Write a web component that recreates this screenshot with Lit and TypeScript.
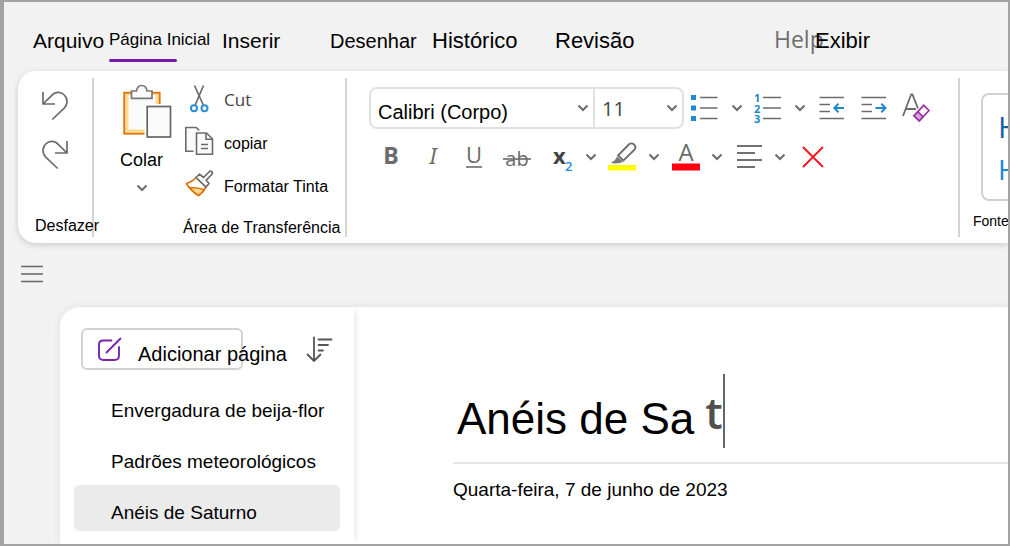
import { LitElement, html, svg, css } from "lit";
import { customElement, property, state } from "lit/decorators.js";
import { classMap } from "lit/directives/class-map.js";

const undoPath = svg`<path d="M1 1v12h12M1 13 9 5.2C12.500 .6 18.500 .2 22.300 4c4 4.200 3.400 9.600-.3 13.400L10.300 28.500"/>`;

const icons: Record<string, unknown> = {
  undo: html`<svg width="26" height="30" viewBox="0 0 26 30" class="line">${undoPath}</svg>`,
  redo: html`<svg width="26" height="30" viewBox="0 0 26 30" class="line"><g transform="matrix(-1 0 0 1 26 0)">${undoPath}</g></svg>`,
  chevron: html`<svg width="12" height="8" viewBox="0 0 12 8" class="line bold"><path d="M1.500 1.500 6 6l4.500-4.500"/></svg>`,
  paste: html`<svg width="54" height="56" viewBox="0 0 54 56">
    <rect x="4.200" y="8.700" width="35.500" height="41" fill="#fbdb93" stroke="#e0730c" stroke-width="1.800"/>
    <rect x="8.500" y="11" width="27" height="34.500" fill="#fafafa"/>
    <path d="M24.500 20H54v36H24.500z" fill="#fff"/>
    <rect x="27.200" y="22.500" width="23.300" height="30.500" fill="#fafafa" stroke="#666" stroke-width="1.700"/>
    <path d="M11.500 7h5C17 3.300 19 1.500 21.700 1.500s4.800 1.800 5.300 5.500h5v7.300H11.500z" fill="#fafafa" stroke="#777" stroke-width="1.700"/></svg>`,
  cut: html`<svg width="28" height="30" viewBox="0 0 28 30" fill="none" stroke-width="1.700">
    <path d="M9.500 1.500 18.500 21.500M18.500 1.500 10 21.500" stroke="#6b6b6b"/>
    <circle cx="9" cy="24.300" r="3" stroke="#2b8fd3" stroke-width="2"/><circle cx="19.500" cy="24.300" r="3" stroke="#2b8fd3" stroke-width="2"/></svg>`,
  copy: html`<svg width="28" height="30" viewBox="0 0 28 30" fill="#fafafa" stroke="#6b6b6b" stroke-width="1.600">
    <path d="M8.500 24.300H.8V.5h10.400l3 3" /><path d="M11.500 6h10l6 6v15.300h-16z"/><path d="M21 6v6.300h6.500M16 17.500h7M16 21.500h7" fill="none"/></svg>`,
  brush: html`<svg width="28" height="30" viewBox="0 0 28 30" stroke-linejoin="round" stroke-width="1.700">
    <path d="M1.300 13.500C5.500 12.500 8.500 10.500 11 7.500l10 9.500c-2 4-4.500 6.500-7.500 8.500-5-3-9-7-12.200-12z" fill="#fff" stroke="#e0730c"/>
    <path d="M4.500 17.500c5 0 9.500 0 14.500 2.500-1.500 2.500-3.500 4-5.500 5.500-3.500-2-6.500-4.800-9-8z" fill="#fbdb93" stroke="#e0730c"/>
    <path d="m11 7.500 3.500-3.300 4 3.300L24 2c2-2 4.500.3 2.700 2.500l-5.400 5.700 2.700 3.300-3 3.500z" fill="#fafafa" stroke="#6b6b6b"/></svg>`,
  bullets: html`<svg width="28" height="28" viewBox="0 0 28 28"><path d="M0 1h5v5H0zM0 11.500h5v5H0zM0 22h5v5H0z" fill="#2088cf"/>
    <path d="M9 3.500h17.500M9 14h17.500M9 24.500h17.500" stroke="#6b6b6b" stroke-width="1.600"/></svg>`,
  numbers: html`<svg width="28" height="30" viewBox="0 0 28 30"><g class="digits"><text x="0" y="9">1</text><text x="0" y="19.500">2</text><text x="0" y="30">3</text></g>
    <path d="M9 4.500h18M9 15h18M9 25.500h18" stroke="#6b6b6b" stroke-width="1.600"/></svg>`,
  outdent: html`<svg width="28" height="28" viewBox="0 0 28 28" class="line"><path d="M1.500 3.500H26M1.500 10.500H12M1.500 17.500H12M1.500 24.500H26"/><path class="blue" d="M26 14H16.500M20.500 9.800 16.300 14l4.200 4.200"/></svg>`,
  indent: html`<svg width="28" height="28" viewBox="0 0 28 28" class="line"><path d="M1.500 3.500H26M1.500 10.500H12M1.500 17.500H12M1.500 24.500H26"/><path class="blue" d="M15.500 14H25M21.300 9.800 25.500 14l-4.200 4.200"/></svg>`,
  clear: html`<svg width="28" height="30" viewBox="0 0 28 30" class="line"><path stroke-width="1.800" d="M1 23 9.200 1.300h1.200L16 15.500M4 16h10"/>
    <path d="m12 22.800 9.700-10.500 5.300 5.200-9.800 10.300z" fill="#fff" stroke="#9a35a5"/><path d="m12 22.800 3.900-4.200 5.200 5.200-3.900 4z" fill="#d7a4dc" stroke="#9a35a5"/></svg>`,
  underline: html`<svg width="28" height="28" viewBox="0 0 28 28" class="letters"><text x="13" y="20" text-anchor="middle">U</text><path d="M5 24h16" stroke="#6b6b6b" stroke-width="1.600"/></svg>`,
  strike: html`<svg width="28" height="28" viewBox="0 0 28 28" class="letters"><text class="ab" x="14" y="22.500" text-anchor="middle">ab</text><path d="M0 16h28" stroke="#6b6b6b" stroke-width="1.600"/></svg>`,
  subscript: html`<svg width="28" height="28" viewBox="0 0 28 28" class="letters"><text class="x" x="8" y="21">x</text><text class="sub" x="20" y="27.500">2</text></svg>`,
  highlight: html`<svg width="28" height="30" viewBox="0 0 28 30"><path d="M0 23h28v5.500H0z" fill="#ff0"/>
    <path d="M2.500 21c3.500-1.500 5-3 6.500-6.500l6 5c-3 2.200-7 2.300-12.500 1.500z" fill="#777"/>
    <path d="m10 13.500 10.800-11c3.500-3 8.500 1.200 5.700 5.200L15.500 18.500z" fill="#fafafa" stroke="#6b6b6b" stroke-width="1.800"/></svg>`,
  color: html`<svg width="28" height="30" viewBox="0 0 28 30" class="letters"><text class="a" x="15" y="19" text-anchor="middle">A</text><path d="M1 21.500h28v7H1z" fill="#ff0010"/></svg>`,
  align: html`<svg width="28" height="28" viewBox="0 0 28 28"><path d="M3 3h25M3 10h18M3 17h25M3 24h18" stroke="#444" stroke-width="1.700"/></svg>`,
  remove: html`<svg width="28" height="28" viewBox="0 0 28 28"><path d="m6 4 20 20M26 4 6 24" stroke="#fa1420" stroke-width="1.900"/></svg>`,
  menu: html`<svg width="22" height="18" viewBox="0 0 22 18"><path d="M0 1.500h22M0 9h22M0 16.500h22" stroke="#666" stroke-width="1.700"/></svg>`,
  compose: html`<svg width="26" height="26" viewBox="0 0 26 26" fill="none" stroke="#7a25b0" stroke-width="1.900" stroke-linecap="round"><path d="M14.500 4.500H6.500C3.500 4.500 2 5.500 2 8.500V19.500c0 3 1.500 4.500 4.500 4.500h11c3 0 4.500-1.500 4.500-4.500v-8.500M9.500 16.500 23.500 2.500"/></svg>`,
  sort: html`<svg width="26" height="26" viewBox="0 0 26 26" fill="none" stroke="#555" stroke-width="1.800" stroke-linecap="round"><path d="M8 1.500v23M1.500 18.500 8 25l6.500-6.500M12.500 3.500h13M12.500 9H22M12.500 14.500H17"/></svg>`,
};

const iconStyles = css`
  svg { display: block; flex: none; overflow: visible; }
  .line { fill: none; stroke: #6b6b6b; stroke-width: 1.7; }
  .line.bold { stroke-width: 2; }
  .blue { stroke: #2088cf; stroke-width: 2; }
  .digits { font: 700 11px "Open Sans", sans-serif; fill: #2088cf; }
  .letters { font: 400 22px "Open Sans", sans-serif; fill: #6b6b6b; }
  .ab { font-size: 20px; }
  .x { font-size: 22px; font-weight: 700; fill: #444; }
  .sub { font-size: 13px; font-weight: 600; fill: #2b8fd3; }
  .a { font-size: 24px; }
  button {
    display: flex; align-items: center; padding: 0; border: 0; background: none;
    font: inherit; color: inherit; white-space: nowrap; cursor: pointer;
  }
`;

@customElement("tool-button")
class ToolButton extends LitElement {
  @property() icon = "";
  @property() label = "";
  @property({ type: Boolean }) menu = false;

  static styles = [iconStyles, css`
    :host { display: flex; gap: 8px; }
    .tool { justify-content: center; width: 28px; height: 30px; }
    .arrow { justify-content: center; width: 20px; height: 30px; }
    .letter { font: 400 22px/30px "Noto Sans", sans-serif; color: #6b6b6b; }
    .strong { font-size: 23px; line-height: 26px; font-family: "Open Sans", sans-serif; font-weight: 700; }
    .slant { line-height: 26px; font-style: italic; }
    .tool .letter { height: 30px; }
  `];

  render() {
    const glyph =
      this.icon === "bold" ? html`<span class="letter strong">B</span>`
      : this.icon === "italic" ? html`<span class="letter slant">I</span>`
      : icons[this.icon];
    return html`
      <button class="tool" aria-label=${this.label}>${glyph}</button>
      ${this.menu ? html`<button class="arrow" aria-label="${this.label}: opções">${icons.chevron}</button>` : null}
    `;
  }
}

@customElement("app-ribbon")
class AppRibbon extends LitElement {
  static styles = [iconStyles, css`
    :host { display: block; }
    .ribbon {
      display: flex; height: 172px; box-sizing: border-box; padding-top: 7px;
      background: #fff; border-radius: 18px 0 0 18px; box-shadow: 0 2px 6px rgba(0, 0, 0, .16);
    }
    .group {
      display: flex; flex-direction: column; justify-content: space-between; flex: none;
      box-sizing: border-box; height: 159px; border-right: 2px solid #d4d4d4;
    }
    .caption { font-size: 16px; line-height: 18px; white-space: nowrap; }
    .history { width: 76px; padding-left: 17px; }
    .stack { display: flex; flex-direction: column; gap: 19px; padding: 13px 0 0 7px; }
    .history .caption { width: 50px; line-height: 22px; }
    .clipboard { width: 253px; }
    .clipboard .caption { padding-left: 89px; }
    .actions { display: flex; padding: 6px 0 0 26px; gap: 11px; }
    .paste { flex-direction: column; align-items: flex-start; width: 54px; font-size: 18px; line-height: 22px; }
    .paste span { height: 31px; padding-top: 9px; margin-bottom: 4px; }
    .paste svg:last-child { margin-left: 16px; }
    .list { display: flex; flex-direction: column; gap: 13px; }
    .list button { gap: 11px; height: 30px; font-size: 16px; }
    .list span { padding-top: 3px; }
    .list .latin { font: 400 17px "Open Sans", sans-serif; color: #444; }
    .list .latin span { padding: 0; }
    .font { width: 613px; justify-content: flex-start; gap: 13px; padding: 9px 0 0 22px; }
    .row { display: flex; align-items: center; }
    .combo {
      display: flex; box-sizing: border-box; width: 315px; height: 42px; margin-right: 7px;
      border: 2px solid #e1e1e1; border-radius: 8px;
    }
    .field { display: flex; align-items: center; box-sizing: border-box; padding-right: 4px; }
    .family { width: 224px; border-right: 2px solid #e1e1e1; }
    .size { flex: 1; }
    select {
      appearance: none; flex: 1; min-width: 0; height: 38px; border: 0; padding: 8px 0 0 7px; background: none;
      font: 400 20px "Liberation Sans", sans-serif; color: #000; outline: none;
    }
    .size select { padding-top: 0; font-family: "Open Sans", sans-serif; color: #444; }
    .splits { display: flex; gap: 7px; }
    .singles { display: flex; gap: 14px; margin-left: 8px; }
    .format { display: flex; gap: 14px; padding-left: 8px; }
    .styles { flex: 1 0 60px; border: 0; padding: 15px 0 0 13px; height: 159px; overflow: hidden; }
    .gallery {
      display: flex; flex-direction: column; gap: 2px; box-sizing: border-box; width: 120px; height: 108px; margin-left: 8px;
      padding: 12px 0 0 15px; border: 2px solid #d1d1d1; border-radius: 8px;
      font: 400 30px/40px "Open Sans", sans-serif;
    }
    .h1 { color: #1461a8; }
    .h2 { color: #1f86d8; font-size: 28px; }
    .styles .caption { font-size: 14px; margin-bottom: 7px; }
  `];

  render() {
    return html`
      <section class="ribbon">
        <div class="group history">
          <div class="stack">
            <button aria-label="Desfazer">${icons.undo}</button>
            <button aria-label="Refazer">${icons.redo}</button>
          </div>
          <div class="caption">Desfazer</div>
        </div>
        <div class="group clipboard">
          <div class="actions">
            <button class="paste">${icons.paste}<span>Colar</span>${icons.chevron}</button>
            <div class="list">
              <button class="latin">${icons.cut}<span>Cut</span></button>
              <button>${icons.copy}<span>copiar</span></button>
              <button>${icons.brush}<span>Formatar Tinta</span></button>
            </div>
          </div>
          <div class="caption">Área de Transferência</div>
        </div>
        <div class="group font">
          <div class="row">
            <div class="combo">
              <label class="field family"><select aria-label="Fonte"><option>Calibri (Corpo)</option></select>${icons.chevron}</label>
              <label class="field size"><select aria-label="Tamanho"><option>11</option></select>${icons.chevron}</label>
            </div>
            <div class="splits">
              <tool-button icon="bullets" label="Marcadores" menu></tool-button>
              <tool-button icon="numbers" label="Numeração" menu></tool-button>
            </div>
            <div class="singles">
              <tool-button icon="outdent" label="Diminuir recuo"></tool-button>
              <tool-button icon="indent" label="Aumentar recuo"></tool-button>
              <tool-button icon="clear" label="Limpar formatação"></tool-button>
            </div>
          </div>
          <div class="format">
            <tool-button icon="bold" label="Negrito"></tool-button>
            <tool-button icon="italic" label="Itálico"></tool-button>
            <tool-button icon="underline" label="Sublinhado"></tool-button>
            <tool-button icon="strike" label="Tachado"></tool-button>
            <div class="splits">
              <tool-button icon="subscript" label="Subscrito" menu></tool-button>
              <tool-button icon="highlight" label="Realce" menu></tool-button>
              <tool-button icon="color" label="Cor da fonte" menu></tool-button>
              <tool-button icon="align" label="Alinhamento" menu></tool-button>
              <tool-button icon="remove" label="Excluir"></tool-button>
            </div>
          </div>
        </div>
        <div class="group styles">
          <div class="gallery"><button class="h1">H</button><button class="h2">H</button></div>
          <div class="caption">Fonte</div>
        </div>
      </section>
    `;
  }
}

@customElement("app-root")
class AppRoot extends LitElement {
  @state() page = 2;

  tabs = [
    ["Arquivo", ""], ["Página Inicial", "current"], ["Inserir", ""], ["Desenhar", "medium"],
    ["Histórico", "large"], ["Revisão", "large"], ["Help", "latin"], ["Exibir", "large"],
  ];
  pages = ["Envergadura de beija-flor", "Padrões meteorológicos", "Anéis de Saturno"];

  static styles = [iconStyles, css`
    :host { display: block; font-family: "Liberation Sans", Arial, sans-serif; color: #000; }
    .window {
      display: flex; flex-direction: column; box-sizing: border-box; height: 100vh; overflow: hidden;
      border: 2px solid #a3a3a3; border-left-width: 4px; background: #f2f2f2;
    }
    .tabs {
      display: grid; grid-template-columns: 76px 113px 108px 102px 123px 219px 41px auto;
      align-items: start; flex: none; box-sizing: border-box; height: 69px; padding: 27px 0 0 29px;
    }
    .tab { font-size: 21px; line-height: 24px; }
    .medium { font-size: 20px; }
    .large { font-size: 22px; }
    .latin { font-family: "Open Sans", sans-serif; font-size: 23px; line-height: 20px; color: #6e6e6e; }
    .current { flex-direction: column; align-items: flex-start; font-size: 17px; line-height: 22px; }
    .current::after { content: ""; width: 68px; height: 3px; margin-top: 8px; border-radius: 2px; background: #7719aa; }
    app-ribbon { flex: none; margin-left: 14px; }
    .menu { flex: none; align-self: flex-start; margin: 22px 0 24px 17px; }
    .body {
      display: flex; flex: 1; min-height: 0; margin-left: 56px; background: #fff;
      border-top-left-radius: 20px; box-shadow: 0 0 8px rgba(0, 0, 0, .08);
    }
    .pages {
      flex: none; box-sizing: border-box; width: 294px; padding: 21px 14px 0; border-top-left-radius: 20px;
      box-shadow: 5px 0 7px -4px rgba(0, 0, 0, .12);
    }
    .head { display: flex; align-items: center; justify-content: space-between; padding: 0 8px 0 7px; margin-bottom: 13px; }
    .add {
      box-sizing: border-box; width: 162px; height: 42px; padding-left: 14px; gap: 15px;
      border: 2px solid #d2d2d2; border-radius: 6px; font-size: 20px; line-height: 24px;
    }
    .add span { padding-top: 10px; }
    .items { display: flex; flex-direction: column; gap: 5px; margin: 0; padding: 0; list-style: none; }
    .item { box-sizing: border-box; width: 100%; height: 46px; padding: 10px 0 0 37px; border-radius: 6px; font-size: 19px; }
    .selected { background: #ebebeb; }
    .note { flex: 1; min-width: 0; padding: 67px 0 0 99px; }
    .title {
      display: flex; align-items: center; height: 74px; margin: 0; padding-left: 4px;
      font-size: 44px; font-weight: 400; line-height: 50px; white-space: nowrap;
    }
    .title span { padding-top: 16px; }
    .title .typed { padding: 2px 0 0 11px; font-family: "Open Sans", sans-serif; font-weight: 600; color: #505050; }
    .caret { width: 2px; height: 74px; background: #666; }
    .date { margin-top: 14px; padding-top: 14px; border-top: 2px solid #e5e5e5; font-size: 19px; line-height: 24px; }
  `];

  render() {
    return html`
      <div class="window">
        <nav class="tabs">
          ${this.tabs.map(([name, kind]) => html`<button class="tab ${kind}">${name}</button>`)}
        </nav>
        <app-ribbon></app-ribbon>
        <button class="menu" aria-label="Navegação">${icons.menu}</button>
        <div class="body">
          <aside class="pages">
            <div class="head">
              <button class="add">${icons.compose}<span>Adicionar página</span></button>
              <button aria-label="Classificar">${icons.sort}</button>
            </div>
            <ul class="items">
              ${this.pages.map((name, i) => html`<li>
                <button class=${classMap({ item: true, selected: i === this.page })} @click=${() => (this.page = i)}>${name}</button>
              </li>`)}
            </ul>
          </aside>
          <main class="note">
            <h1 class="title"><span>Anéis de Sa</span><span class="typed">t</span><i class="caret"></i></h1>
            <div class="date">Quarta-feira, 7 de junho de 2023</div>
          </main>
        </div>
      </div>
    `;
  }
}
